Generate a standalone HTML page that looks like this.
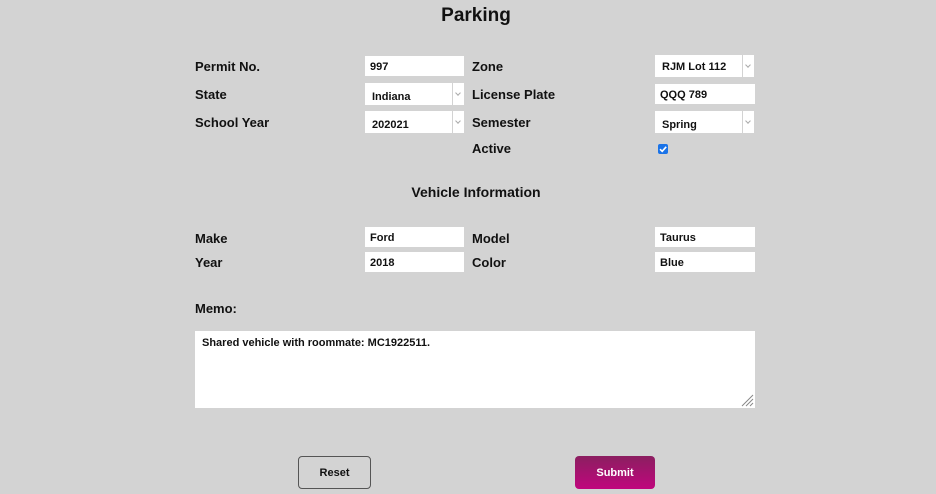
<!DOCTYPE html>
<html><head><meta charset="utf-8"><style>
body{margin:0;width:936px;height:494px;background:#d3d3d3;font-family:"Liberation Sans",sans-serif;position:relative;overflow:hidden;color:#111}
.a{position:absolute}
.t{font-weight:bold;font-size:19px;left:0;width:952px;text-align:center;top:5px}
.l{font-weight:bold;font-size:13px}
.i{background:#fff;height:20px;font-size:11px;font-weight:bold;line-height:22px;padding-left:5px;box-sizing:border-box}
.s{background:#fff;height:22px;font-size:11px;font-weight:bold;line-height:28px;padding-left:7px;box-sizing:border-box}
.ar{background:#fff;height:22px;width:11px}
.ar:after{content:"";position:absolute;left:3px;top:8px;width:3px;height:3px;border-right:1px solid #aaa;border-bottom:1px solid #aaa;transform:rotate(45deg)}
</style></head><body>
<div class="a t">Parking</div>

<div class="a l" style="left:195px;top:59px">Permit No.</div>
<div class="a l" style="left:195px;top:87px">State</div>
<div class="a l" style="left:195px;top:115px">School Year</div>
<div class="a l" style="left:472px;top:59px">Zone</div>
<div class="a l" style="left:472px;top:87px">License Plate</div>
<div class="a l" style="left:472px;top:115px">Semester</div>
<div class="a l" style="left:472px;top:141px">Active</div>

<div class="a i" style="left:365px;top:56px;width:99px">997</div>
<div class="a s" style="left:365px;top:83px;width:87px">Indiana</div><div class="a ar" style="left:453px;top:83px"></div>
<div class="a s" style="left:365px;top:111px;width:87px">202021</div><div class="a ar" style="left:453px;top:111px"></div>

<div class="a s" style="left:655px;top:55px;width:87px;line-height:25px">RJM Lot 112</div><div class="a ar" style="left:743px;top:55px"></div>
<div class="a i" style="left:655px;top:84px;width:100px">QQQ 789</div>
<div class="a s" style="left:655px;top:111px;width:87px">Spring</div><div class="a ar" style="left:743px;top:111px"></div>
<div class="a" style="left:658px;top:144px;width:10px;height:10px;background:#1a73e8;border-radius:2px"><svg width="10" height="10" style="position:absolute;left:0;top:0"><path d="M2 5.2 L4.2 7.3 L8.2 2.8" stroke="#fff" stroke-width="1.6" fill="none"/></svg></div>

<div class="a l" style="left:0;width:952px;text-align:center;top:184px;font-size:14px">Vehicle Information</div>

<div class="a l" style="left:195px;top:231px">Make</div>
<div class="a l" style="left:195px;top:255px">Year</div>
<div class="a l" style="left:472px;top:231px">Model</div>
<div class="a l" style="left:472px;top:255px">Color</div>
<div class="a i" style="left:365px;top:227px;width:99px">Ford</div>
<div class="a i" style="left:365px;top:252px;width:99px">2018</div>
<div class="a i" style="left:655px;top:227px;width:100px">Taurus</div>
<div class="a i" style="left:655px;top:252px;width:100px">Blue</div>

<div class="a l" style="left:195px;top:301px">Memo:</div>
<div class="a" style="left:195px;top:331px;width:560px;height:77px;background:#fff;font-size:11px;font-weight:bold;padding:6px 0 0 7px;box-sizing:border-box">Shared vehicle with roommate: MC1922511.
<svg width="14" height="14" style="position:absolute;right:1px;bottom:1px"><path d="M13 2 L2 13 M13 6 L6 13 M13 10 L10 13" stroke="#888" stroke-width="1"/></svg></div>

<div class="a" style="left:298px;top:456px;width:73px;height:33px;border:1px solid #555;border-radius:4px;box-sizing:border-box;text-align:center;line-height:33px;font-size:11px;font-weight:bold">Reset</div>
<div class="a" style="left:575px;top:456px;width:80px;height:33px;border-radius:4px;background:linear-gradient(#8b1f60,#c0067d);color:#fff;text-align:center;line-height:35px;font-size:11px;font-weight:bold">Submit</div>
</body></html>
